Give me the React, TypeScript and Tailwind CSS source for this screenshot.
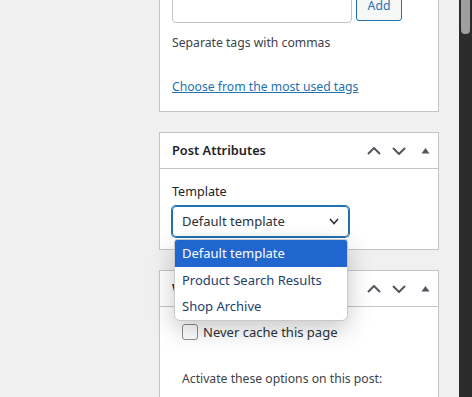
import React from "react";

const Up = () => (
  <svg width="14" height="8" viewBox="0 0 14 8" fill="none">
    <path d="M1 7 L7 1 L13 7" stroke="#50575e" strokeWidth="2" />
  </svg>
);
const Down = () => (
  <svg width="14" height="8" viewBox="0 0 14 8" fill="none">
    <path d="M1 1 L7 7 L13 1" stroke="#50575e" strokeWidth="2" />
  </svg>
);
const Tri = () => (
  <svg width="9" height="7" viewBox="0 0 9 7">
    <path d="M0.5 6.5 L4.5 1 L8.5 6.5 Z" fill="#50575e" />
  </svg>
);

const Header = ({ title }: { title: string }) => (
  <div className="flex h-[36px] items-center justify-between border-b border-[#c3c4c7] pl-[12px] pr-[8px]">
    <span className="text-[12.8px] font-semibold text-[#1d2327]">{title}</span>
    <div className="flex items-center">
      <Up />
      <span className="ml-[11px]">
        <Down />
      </span>
      <span className="ml-[15px]">
        <Tri />
      </span>
    </div>
  </div>
);

export default function App() {
  return (
    <div
      className="flex h-[397px] w-[472px] overflow-hidden bg-[#f0f0f1] text-[12.2px] text-[#3c434a]"
      style={{ fontFamily: '"Noto Sans", "Open Sans", sans-serif' }}
    >
      <div className="relative flex-1">
        <div className="ml-[159px] mt-[-40px] flex w-[280px] flex-col gap-[20px]">
          {/* Tags panel */}
          <div className="border border-[#c3c4c7] bg-white px-[12px] pb-[12px] pt-[30px]">
            <div className="flex items-end gap-[4px]">
              <div className="h-[30px] w-[180px] rounded-[4px] border border-[#c3c4c7] bg-white" />
              <div className="mb-[2px] flex h-[30px] w-[46px] items-center justify-center rounded-[3px] border border-[#2271b1] bg-[#f6f7f7] text-[12.2px] text-[#2271b1]">
                Add
              </div>
            </div>
            <div className="mt-[10px] leading-[20px]">Separate tags with commas</div>
            <div className="mt-[24px] leading-[20px] text-[#2271b1] underline">
              Choose from the most used tags
            </div>
            <div className="h-[2px]" />
          </div>

          {/* Post Attributes */}
          <div className="relative border border-[#c3c4c7] bg-white">
            <Header title="Post Attributes" />
            <div className="px-[12px] pb-[12px] pt-[13px]">
              <div className="font-normal text-[12.6px] leading-[20px] text-[#1d2327]">Template</div>
              <div className="mt-[4px] flex h-[31px] w-[177px] items-center justify-between rounded-[4px] border border-[#2271b1] pl-[9px] pr-[9px] text-[13px] text-[#2c3338] shadow-[0_0_0_1px_#2271b1]">
                <span>Default template</span>
                <svg width="10" height="7" viewBox="0 0 10 7" fill="none">
                  <path d="M1 1 L5 5.5 L9 1" stroke="#2c3338" strokeWidth="1.6" />
                </svg>
              </div>
            </div>
            {/* dropdown */}
            <div className="absolute left-[14px] top-[106px] z-10 w-[174px] overflow-hidden rounded-b-[6px] rounded-t-[3px] border border-[#c9c9c9] bg-white text-[13px] text-[#23406b] shadow-[0_8px_24px_rgba(0,0,0,0.22)]">
              <div className="flex h-[27px] items-center bg-[#1f66cf] pl-[7px] text-white">Default template</div>
              <div className="flex h-[27px] items-center pl-[7px]">Product Search Results</div>
              <div className="flex h-[26px] items-center pl-[7px]">Shop Archive</div>
            </div>
          </div>

          {/* Cache panel */}
          <div className="border border-[#c3c4c7] bg-white">
            <Header title="W3 Total Cache" />
            <div className="px-[22px] pt-[15px]">
              <div className="flex items-center gap-[5px]">
                <div className="h-[16px] w-[16px] rounded-[3px] border border-[#8c8f94] bg-white" />
                <span className="text-[13px] leading-[20px] text-[#2c3338]">Never cache this page</span>
              </div>
              <div className="mt-[27px] leading-[20px]">Activate these options on this post:</div>
              <div className="h-[40px]" />
            </div>
          </div>
        </div>
      </div>
      <div className="w-[13px] bg-[#2b2b2b] pl-[2px]">
        <div className="h-[34px] w-[9px] rounded-b-[4px] bg-[#9f9f9f]" />
      </div>
    </div>
  );
}
